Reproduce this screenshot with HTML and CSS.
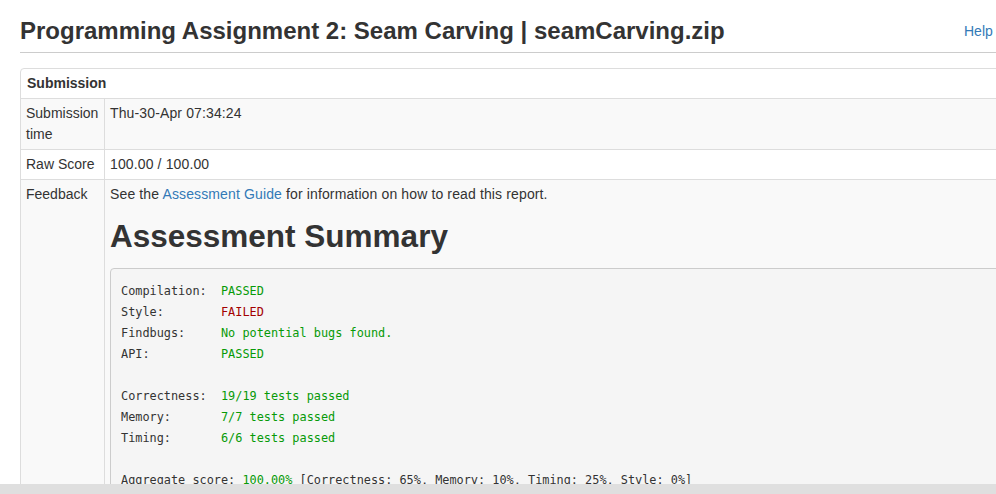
FILE: index.html
```html
<!DOCTYPE html>
<html>
<head>
<meta charset="utf-8">
<link rel="stylesheet" href="styles.css">
</head>
<body>
<div class="page">
  <div class="header">
    <h2 class="title">Programming Assignment 2: Seam Carving | seamCarving.zip</h2>
    <a class="help" href="#">Help</a>
  </div>
  <table class="sub">
    <thead>
      <tr><th colspan="2">Submission</th></tr>
    </thead>
    <tbody>
      <tr class="odd"><td class="lbl">Submission time</td><td class="val">Thu-30-Apr 07:34:24</td></tr>
      <tr><td class="lbl">Raw Score</td><td class="val">100.00 / 100.00</td></tr>
      <tr class="odd"><td class="lbl">Feedback</td><td class="val">
        <div class="intro">See the <a href="#">Assessment Guide</a> for information on how to read this report.</div>
        <h1 class="summary">Assessment Summary</h1>
<pre class="report">Compilation:  <span class="ok">PASSED</span>
Style:        <span class="bad">FAILED</span>
Findbugs:     <span class="ok">No potential bugs found.</span>
API:          <span class="ok">PASSED</span>

Correctness:  <span class="ok">19/19 tests passed</span>
Memory:       <span class="ok">7/7 tests passed</span>
Timing:       <span class="ok">6/6 tests passed</span>

Aggregate score: <span class="ok">100.00%</span> [Correctness: 65%, Memory: 10%, Timing: 25%, Style: 0%]
</pre>
      </td></tr>
    </tbody>
  </table>
</div>
<div class="hscroll"></div>
</body>
</html>
```
FILE: styles.css
```css
html, body {
  margin: 0;
  padding: 0;
  overflow: hidden;
  background: #fff;
}
body {
  font-family: "Liberation Sans", Arial, sans-serif;
  font-size: 14px;
  line-height: 21px;
  color: #333;
}
a {
  color: #337ab7;
  text-decoration: none;
}
.page {
  width: 1160px;
  padding: 0 20px;
}
.header {
  display: grid;
  grid-template-columns: 944px auto;
  align-items: center;
  padding-top: 18px;
  padding-bottom: 8px;
  border-bottom: 1px solid #ccc;
}
.title {
  margin: 0;
  font-size: 24px;
  line-height: 26px;
  font-weight: bold;
  color: #333;
  white-space: nowrap;
}
.help {
  font-size: 14px;
}
.sub {
  margin-top: 15px;
  width: 1140px;
  border-collapse: separate;
  border-spacing: 0;
  border: 1px solid #ddd;
  border-radius: 4px;
}
.sub th {
  text-align: left;
  font-size: 14px;
  font-weight: bold;
  padding: 4px 6px;
  line-height: 21px;
}
.sub td {
  border-top: 1px solid #ddd;
  padding: 4px 5px;
  vertical-align: top;
}
.sub tr.odd td {
  background: #f9f9f9;
}
.sub td.lbl {
  width: 73px;
  border-right: 1px solid #ddd;
}
.sub td.val {
  letter-spacing: 0.13px;
}
.summary {
  margin: 13px 0 14px;
  font-size: 31.5px;
  line-height: 36px;
  font-weight: bold;
  color: #333;
  letter-spacing: 0;
}
.report {
  margin: 0;
  padding: 12px 10px 10px;
  background: #f5f5f5;
  border: 1px solid #ccc;
  border-radius: 4px;
  font-family: "DejaVu Sans Mono", "Liberation Mono", monospace;
  font-size: 11.86px;
  line-height: 21px;
  letter-spacing: 0;
  color: #333;
}
.ok { color: #079a07; }
.bad { color: #a30000; }
.hscroll {
  position: fixed;
  left: 0;
  right: 0;
  bottom: 0;
  height: 10px;
  background: #dfdfdf;
}
```
